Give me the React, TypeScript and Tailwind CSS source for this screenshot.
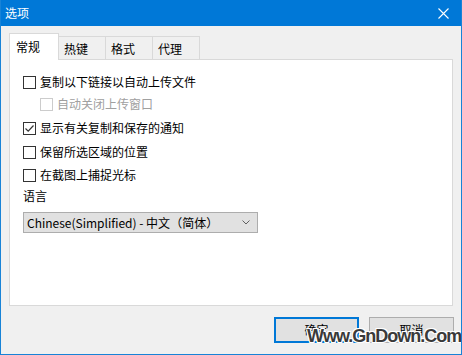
import React from 'react';

const OPTIONS = [
  { label: '复制以下链接以自动上传文件', checked: false, disabled: false, indent: false, mt: 'mt-[12px]' },
  { label: '自动关闭上传窗口', checked: false, disabled: true, indent: true, mt: 'mt-[2px]' },
  { label: '显示有关复制和保存的通知', checked: true, disabled: false, indent: false, mt: 'mt-[4px]' },
  { label: '保留所选区域的位置', checked: false, disabled: false, indent: false, mt: 'mt-[4px]' },
  { label: '在截图上捕捉光标', checked: false, disabled: false, indent: false, mt: 'mt-[3px]' },
];

const TABS = ['常规', '热键', '格式', '代理'];

function CheckBox({ checked, disabled }: { checked: boolean; disabled: boolean }) {
  return (
    <div
      className={`flex h-[13px] w-[13px] flex-shrink-0 items-center justify-center border bg-white ${
        disabled ? 'border-[#cccccc]' : 'border-[#333333]'
      }`}
    >
      {checked && (
        <svg width="11" height="11" viewBox="0 0 11 11">
          <polyline points="1.5,5.5 4.2,8.2 9.5,2.5" fill="none" stroke="#333333" strokeWidth="1.2" />
        </svg>
      )}
    </div>
  );
}

export default function App() {
  return (
    <div className="relative flex h-[355px] w-[462px] flex-col overflow-hidden border-x border-b border-[#1883d7] bg-[#f0f0f0] font-['Noto_Sans_CJK_SC','Microsoft_YaHei',sans-serif] text-[12px] text-black">
      {/* title bar */}
      <div className="-mx-px flex h-[26px] flex-shrink-0 items-center justify-between bg-[#0078d7] pl-[5px] pr-[10px] text-white">
        <span className="text-[12px] leading-none">选项</span>
        <svg width="11" height="11" viewBox="0 0 11 11" className="mr-[3px]">
          <path d="M0.5 0.5 L10.5 10.5 M10.5 0.5 L0.5 10.5" stroke="#ffffff" strokeWidth="1.1" />
        </svg>
      </div>

      {/* tabs */}
      <div className="ml-[8px] mt-[7px] flex h-[26px] items-end">
        {TABS.map((t, i) =>
          i === 0 ? (
            <div
              key={t}
              className="relative z-10 -mb-px flex h-[27px] w-[50px] items-center border border-b-0 border-[#d9d9d9] bg-white pl-[6px] leading-none"
            >
              {t}
            </div>
          ) : (
            <div
              key={t}
              className="-ml-px flex h-[23px] w-[48px] items-center border border-b-0 border-[#d9d9d9] bg-[#f0f0f0] pl-[5px] pt-[1px] leading-none"
            >
              {t}
            </div>
          )
        )}
      </div>

      {/* panel */}
      <div className="ml-[8px] flex h-[247px] w-[444px] flex-col border border-[#d9d9d9] bg-white pl-[13px]">
        {OPTIONS.map((o) => (
          <div
            key={o.label}
            className={`flex h-[20px] items-center gap-[4px] ${o.mt} ${o.indent ? 'pl-[17px]' : ''} ${
              o.disabled ? 'text-[#a0a0a0]' : ''
            }`}
          >
            <CheckBox checked={o.checked} disabled={o.disabled} />
            <span className="leading-none">{o.label}</span>
          </div>
        ))}
        <div className="mt-[1px] flex h-[20px] items-center leading-none">语言</div>
        <div className="mt-[6px] flex h-[21px] w-[235px] items-center justify-between border border-[#adadad] bg-[#e1e1e1] pl-[3px] pr-[7px]">
          <span className="leading-none">Chinese(Simplified) - 中文（简体）</span>
          <svg width="8" height="5" viewBox="0 0 8 5">
            <polyline points="0.5,0.5 4,4 7.5,0.5" fill="none" stroke="#606060" strokeWidth="1" />
          </svg>
        </div>
      </div>

      {/* buttons */}
      <div className="mt-[11px] flex justify-end gap-[10px] pr-[7px]">
        <button className="flex h-[26px] w-[85px] items-start justify-center border-2 border-[#0078d7] bg-[#e1e1e1] pt-[5px] leading-none">
          确定
        </button>
        <button className="flex h-[26px] w-[85px] items-start justify-center border border-[#adadad] bg-[#e1e1e1] pt-[6px] leading-none">
          取消
        </button>
      </div>

      {/* watermark */}
      <div className="absolute left-[306px] top-[327px] font-['Liberation_Sans',Arial,sans-serif] text-[18px] font-bold leading-none tracking-[-1px] text-[#3a3a3a] [text-shadow:1px_1px_0_#fff,-1px_-1px_0_#fff,1px_-1px_0_#fff,-1px_1px_0_#fff]">
        Www.GnDown.Com
      </div>
    </div>
  );
}
